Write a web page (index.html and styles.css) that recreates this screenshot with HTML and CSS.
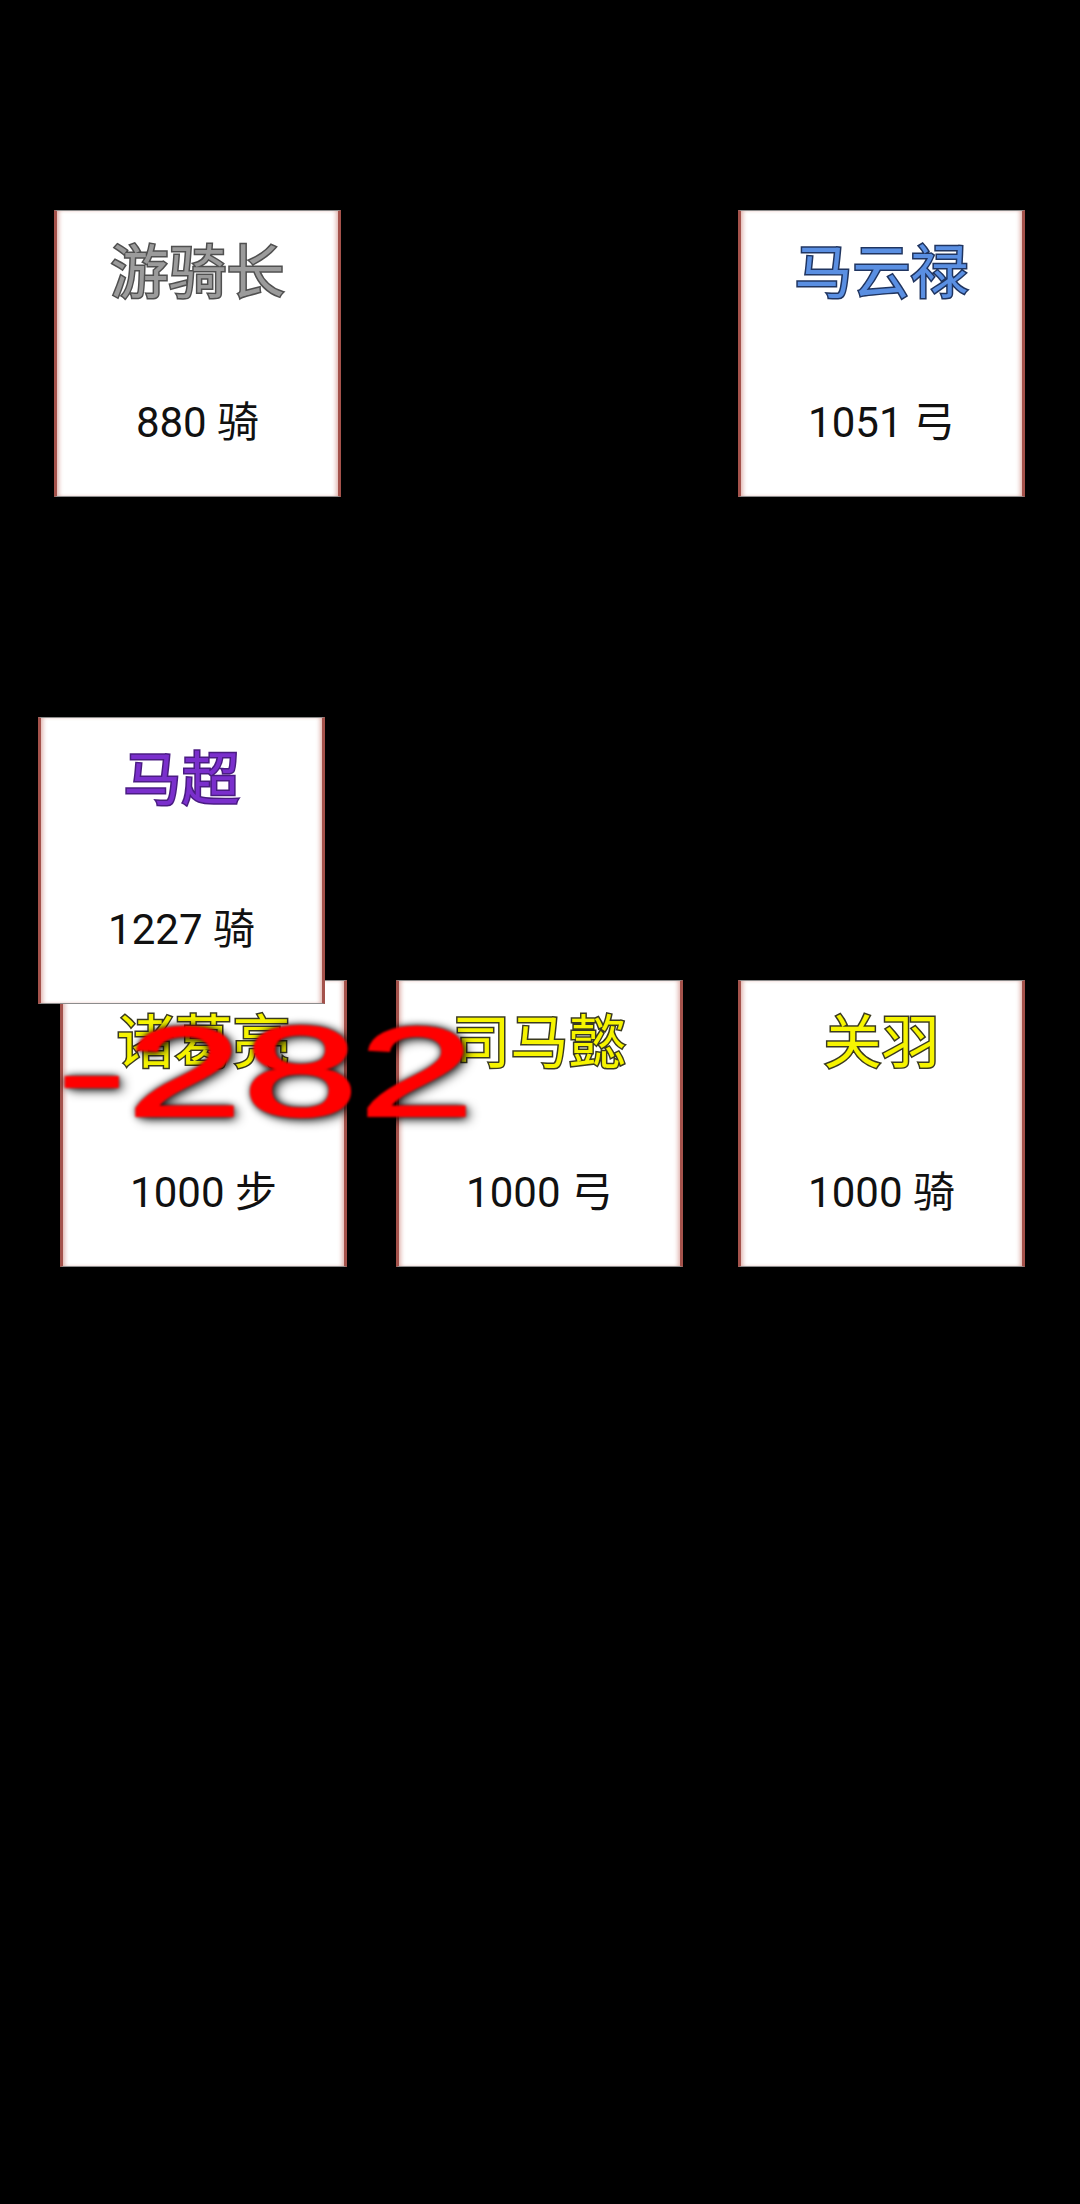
FILE: index.html
```html
<!DOCTYPE html>
<html lang="zh-CN">
<head>
    <meta charset="UTF-8">
    <meta name="viewport" content="width=device-width, initial-scale=1.0">
    <title>对阵</title>
    <link rel="stylesheet" href="styles.css">
</head>
<body>
    <!-- Battlefield -->
    <div class="field">
        <div class="board">
            <!-- Enemy front row -->
            <div class="card">
                <div class="name grey">游骑长</div>
                <div class="troops">880 骑</div>
            </div>
            <div class="slot"></div>
            <div class="card">
                <div class="name blue">马云禄</div>
                <div class="troops">1051 弓</div>
            </div>

            <!-- Enemy back row (马超 is charging forward) -->
            <div class="card charging">
                <div class="name purple">马超</div>
                <div class="troops">1227 骑</div>
            </div>
            <div class="slot"></div>
            <div class="slot"></div>

            <!-- Our row -->
            <div class="card hit">
                <div class="name yellow">诸葛亮</div>
                <div class="troops">1000 步</div>
            </div>
            <div class="card">
                <div class="name yellow">司马懿</div>
                <div class="troops">1000 弓</div>
            </div>
            <div class="card">
                <div class="name yellow">关羽</div>
                <div class="troops">1000 骑</div>
            </div>
        </div>

        <!-- Floating damage number -->
        <div class="damage">-282</div>
    </div>
</body>
</html>
```

FILE: styles.css
```css
/* Reset and Base Styles */
* {
    margin: 0;
    padding: 0;
    box-sizing: border-box;
}

body {
    background: #000;
    font-family: Roboto, "Noto Sans CJK SC", sans-serif;
    height: 100vh;
    overflow: hidden;
}

/* Battlefield */
.field {
    position: relative;
    height: 100%;
}

.board {
    display: grid;
    grid-template-columns: repeat(3, 287px);
    grid-auto-rows: 287px;
    column-gap: 55px;
    row-gap: 98px;
    padding: 210px 0 0 54px;
}

/* Card */
.card {
    position: relative;
    background: #fff;
    border-top: 1px solid #8c8c8c;
    border-bottom: 1px solid #8c8c8c;
    border-left: 3px solid #a4524b;
    border-right: 3px solid #a4524b;
    box-shadow: inset 4px 0 4px -2px rgba(200, 120, 110, 0.55),
                inset -4px 0 4px -2px rgba(200, 120, 110, 0.55);
    padding-top: 22px;
    text-align: center;
}

/* Card States */
.card.charging {
    transform: translate(-16px, 122px);
    z-index: 2;
}

.card.hit {
    transform: translateX(6px);
}

/* Card Content */
.name {
    font-family: "Noto Sans CJK SC", sans-serif;
    font-size: 58px;
    line-height: 70px;
    -webkit-text-stroke: 3px #3c3c3c;
    paint-order: stroke fill;
}

.name.grey {
    color: #9b9b9b;
    -webkit-text-stroke-color: #505050;
}

.name.blue {
    color: #5a8fe2;
    -webkit-text-stroke-color: #203560;
}

.name.purple {
    color: #7a2fcc;
    -webkit-text-stroke-color: #4a1c82;
}

.name.yellow {
    color: #f6f400;
    -webkit-text-stroke-color: #3a3a20;
}

.troops {
    margin-top: 96px;
    font-size: 42px;
    line-height: 48px;
    color: #111;
}

/* Damage number */
.damage {
    position: absolute;
    left: 57px;
    top: 1008px;
    z-index: 3;
    font-family: "Liberation Sans", Arial, sans-serif;
    font-size: 128px;
    line-height: 1;
    color: #f00;
    -webkit-text-stroke: 2px #f00;
    transform: scaleX(1.63);
    transform-origin: left top;
    text-shadow: 0 0 3px #000, 0 0 7px #000, 3px 3px 8px rgba(0, 0, 0, 0.8);
    filter: blur(0.8px);
}
```
